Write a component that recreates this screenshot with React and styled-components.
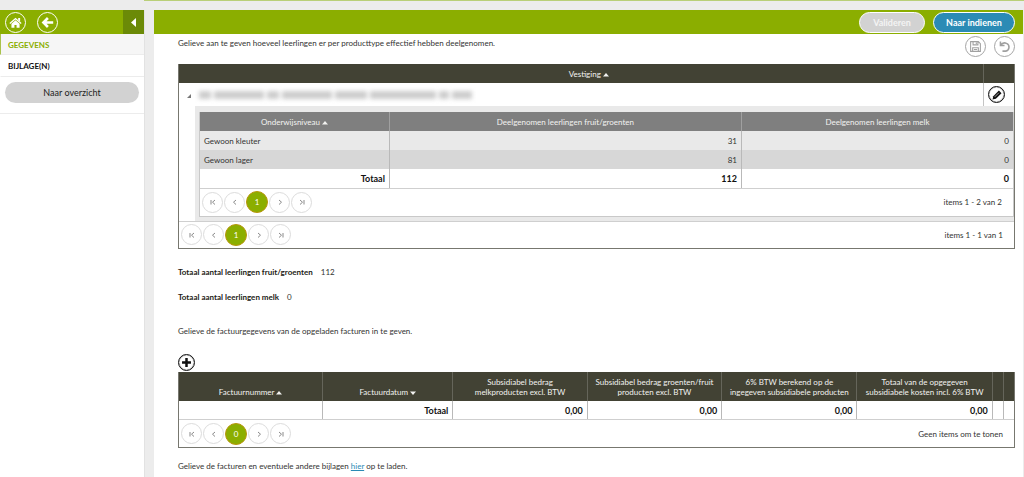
import React from 'react';
import styled, { createGlobalStyle } from 'styled-components';

const GlobalStyle = createGlobalStyle`
  * {
    box-sizing: border-box;
  }

  body {
    margin: 0;
    background: #ececec;
    color: #333332;
    font-family: Lato, 'Open Sans', sans-serif;
    font-size: 8px;
    line-height: 10px;
  }

  button {
    font-family: inherit;
    cursor: pointer;
  }

  p {
    margin: 0;
  }
`;

const TopStrip = styled.div`
  height: 10px;
  margin-left: 144px;
  border-top: 1px solid #b9cf78;
`;

const Page = styled.div`
  display: flex;
  gap: 9px;
  min-height: calc(100vh - 10px);
  padding-right: 1px;
`;

const Sidebar = styled.nav`
  flex: 0 0 145px;
  background: #fff;
  border-right: 1px solid #e2e2e2;
`;

const Bar = styled.div`
  display: flex;
  align-items: center;
  justify-content: ${props => (props.$end ? 'flex-end' : 'flex-start')};
  gap: ${props => (props.$end ? '8px' : '11px')};
  height: 24px;
  padding-left: 5px;
  padding-right: ${props => (props.$end ? '8px' : '0')};
  background: #8bae00;
`;

const RoundButton = styled.button`
  display: flex;
  align-items: center;
  justify-content: center;
  flex-shrink: 0;
  width: 21px;
  height: 21px;
  padding: 0;
  border: 1px solid #fff;
  border-radius: 50%;
  background: transparent;
  color: #fff;
`;

const CollapseButton = styled.button`
  display: flex;
  align-items: center;
  justify-content: center;
  width: 21px;
  height: 24px;
  margin-left: auto;
  padding: 0;
  border: 0;
  background: #6b8a07;
  color: #fff;
`;

const MenuLink = styled.a`
  display: block;
  height: ${props => (props.$active ? '21px' : '22px')};
  padding: 6px 7px;
  border-bottom: 1px solid #ececec;
  border-left: 1px solid ${props => (props.$active ? '#a9c24b' : '#fff')};
  background: ${props => (props.$active ? '#f6f6f6' : '#fff')};
  color: ${props => (props.$active ? '#8bae00' : '#111')};
  font-weight: 700;
  text-decoration: none;
`;

const SidebarActions = styled.div`
  padding: 5px 5px 10px;
  border-bottom: 1px solid #ececec;
`;

const OverviewButton = styled.button`
  width: 100%;
  height: 21px;
  border: 0;
  border-radius: 11px;
  background: #d2d2d2;
  color: #222;
  font-size: 9px;
`;

const PillButton = styled.button`
  width: ${props => (props.$primary ? '82px' : '66px')};
  height: 21px;
  padding: 0;
  border: 1px solid #fff;
  border-radius: 11px;
  background: ${props => (props.$primary ? '#2b8bb5' : '#d2d2d2')};
  color: ${props => (props.$primary ? '#fff' : '#f4f4f4')};
  font-size: 9px;
  font-weight: 700;
`;

const Main = styled.main`
  flex: 1;
  min-width: 0;
  background: #fff;
`;

const Content = styled.div`
  padding: 0 8px 6px 24px;
`;

const Intro = styled.div`
  display: flex;
  justify-content: space-between;
  height: 30px;
  padding-top: 2px;

  p {
    padding-top: 2px;
  }
`;

const Tools = styled.div`
  display: flex;
  gap: 8px;
`;

const ToolButton = styled(RoundButton)`
  border: 1px solid #a5a5a5;
  color: #a0a0a0;
`;

const EditButton = styled(RoundButton)`
  width: 17px;
  height: 17px;
  margin: 0 auto;
  border: 1px solid #111;
  box-shadow: inset 0 0 1px #111;
  color: #111;
`;

const Grid = styled.section`
  border: 1px solid ${props => (props.$nested ? '#c9c9c9' : '#77776f')};
  border-top: 0;
  background: #fff;
`;

const Table = styled.table`
  width: 100%;
  table-layout: fixed;
  border-collapse: collapse;
`;

const Th = styled.th`
  height: ${props => (props.$tall ? '29px' : '19px')};
  padding: ${props => (props.$tall ? '4px 2px' : '0 2px')};
  border-left: 1px solid ${props => (props.$nested ? '#a0a0a0' : '#65655a')};
  background: ${props => (props.$nested ? '#7f7f7f' : '#424234')};
  color: #f2f2f0;
  font-weight: 400;
  vertical-align: bottom;
  line-height: ${props => (props.$tall ? '10px' : '18px')};

  &:first-child,
  &.first {
    border-left: 0;
  }
`;

const Td = styled.td`
  height: 19px;
  padding: 0 4px;
  border-left: 1px solid #b9b9b9;
  background: ${props => props.$tone || '#fff'};
  text-align: ${props => (props.$left ? 'left' : 'right')};

  &:first-child {
    border-left: 0;
  }
`;

const TotalTd = styled(Td)`
  padding-top: 2px;
  border-bottom: 1px solid #cfcfcf;
  color: #111;
  font-size: 9px;
  font-weight: 700;
`;

const SiteTd = styled(Td)`
  height: 23px;
  padding: ${props => (props.$edit ? '0 4px 0 0' : '0 4px')};
  border-left: ${props => (props.$edit ? '1px solid #c4c4c4' : '0')};
`;

const DetailTd = styled.td`
  padding: 6px 0 4px 4px;
  background: #e9e9e9;
`;

const Redacted = styled.div`
  display: flex;
  gap: 3px;
  filter: blur(2px);

  i {
    height: 8px;
    background: #cdcdcd;
  }
`;

const Pager = styled.div`
  display: flex;
  align-items: center;
  gap: 1px;
  height: 27px;
  padding: 0 11px 0 2px;
  border-top: ${props => (props.$line ? '1px solid #cfcfcf' : '0')};
`;

const PageButton = styled.button`
  display: flex;
  align-items: center;
  justify-content: center;
  width: ${props => (props.$current ? '22px' : '21px')};
  height: ${props => (props.$current ? '22px' : '21px')};
  padding: 0;
  border: 1px solid ${props => (props.$current ? '#b8960c' : '#dcdcdc')};
  border-radius: 50%;
  background: ${props => (props.$current ? '#8bae00' : '#fff')};
  color: ${props => (props.$current ? '#fff' : '#8a8a8a')};
  font-size: 8px;
`;

const PagerInfo = styled.span`
  margin-left: auto;
`;

const Totals = styled.dl`
  display: flex;
  flex-direction: column;
  gap: 15px;
  margin: 0;
  padding: 18px 0 24px;

  div {
    display: flex;
    gap: 8px;
  }

  dt {
    color: #222214;
    font-weight: 700;
  }

  dd {
    margin: 0;
  }
`;

const AddButton = styled(EditButton)`
  margin: 18px 0 1px;
`;

const Closing = styled.p`
  padding-top: 13px;

  a {
    color: #2b8bb5;
  }
`;

const Svg = ({ size, children, ...rest }) => (
  <svg width={size} height={size} viewBox="0 0 16 16" fill="currentColor" aria-hidden="true" {...rest}>
    {children}
  </svg>
);

const HomeIcon = () => (
  <Svg size={13}>
    <path d="M8 2 15.500 8.600l-1 1.200L8 4.300 1.500 9.800l-1-1.200z" />
    <path d="M11.300 2.500h2.400v4.500l-2.400-2zM3 9.600 8 5.300l5 4.300V14.500H9.300v-3.500H6.700v3.500H3z" />
  </Svg>
);

const BackIcon = () => (
  <Svg size={13} fill="none" stroke="currentColor" strokeWidth="3.2">
    <path d="M8.500 2.500 3 8l5.500 5.500M3.500 8H15" />
  </Svg>
);

const SaveIcon = () => (
  <Svg size={13} fill="none" stroke="currentColor" strokeWidth="1.3">
    <path d="M2 2h9.500L14 4.500V14H2zM5 2v4h6V2M4.500 14V9.500h7V14M9 3v2M6 11.700h4" />
  </Svg>
);

const UndoIcon = () => (
  <Svg size={13} fill="none" stroke="currentColor" strokeWidth="1.9">
    <path d="M3 1.800v5h5M3.200 6.500C5 3.800 8 3 10.500 4.200a5 5 0 0 1-1 9.500H5.500" />
  </Svg>
);

const PencilIcon = () => (
  <Svg size={12}>
    <path d="M2 14l1-4.500L10.500 2 14 5.500 6.500 13z" />
    <path d="M5 10.500 10.500 5" stroke="#fff" strokeWidth="0.8" />
  </Svg>
);

const PlusIcon = () => (
  <Svg size={11}>
    <path d="M6.200 1.500h3.600v4.700h4.700v3.600H9.800v4.700H6.200V9.800H1.500V6.200h4.700z" />
  </Svg>
);

const CaretLeft = () => (
  <svg width="5" height="9" viewBox="0 0 5 9" fill="currentColor" aria-hidden="true">
    <path d="M5 0v9L0 4.500z" />
  </svg>
);

const SortIcon = ({ down }) => (
  <svg width="6" height="4" viewBox="0 0 6 4" fill="currentColor" aria-hidden="true">
    <path d={down ? 'M0 .5h6L3 4z' : 'M0 3.500h6L3 0z'} />
  </svg>
);

const pagerPaths = {
  first: 'M2 2v4.500M6 2 3.500 4.200 6 6.500',
  prev: 'M5 2 2.500 4.200 5 6.500',
  next: 'M3 2l2.500 2.200L3 6.500',
  last: 'M2 2l2.500 2.200L2 6.500M6 2v4.500',
};

const PagerIcon = ({ name }) => (
  <svg width="8" height="8" viewBox="0 0 8 8" fill="none" stroke="currentColor" aria-hidden="true">
    <path d={pagerPaths[name]} />
  </svg>
);

const PagerBar = ({ page, info, line }) => (
  <Pager $line={line}>
    <PageButton aria-label="Eerste pagina"><PagerIcon name="first" /></PageButton>
    <PageButton aria-label="Vorige pagina"><PagerIcon name="prev" /></PageButton>
    <PageButton $current>{page}</PageButton>
    <PageButton aria-label="Volgende pagina"><PagerIcon name="next" /></PageButton>
    <PageButton aria-label="Laatste pagina"><PagerIcon name="last" /></PageButton>
    <PagerInfo>{info}</PagerInfo>
  </Pager>
);

const levels = [
  { name: 'Gewoon kleuter', fruit: 31, milk: 0, tone: '#e9e9e9' },
  { name: 'Gewoon lager', fruit: 81, milk: 0, tone: '#d7d7d7' },
];

const redactedWidths = [12, 50, 12, 50, 32, 66, 10, 20];

const LevelGrid = () => (
  <Grid $nested>
    <Table>
      <colgroup>
        <col style={{ width: '23.3%' }} />
        <col style={{ width: '43.3%' }} />
        <col />
      </colgroup>
      <thead>
        <tr>
          <Th $nested>Onderwijsniveau <SortIcon /></Th>
          <Th $nested>Deelgenomen leerlingen fruit/groenten</Th>
          <Th $nested>Deelgenomen leerlingen melk</Th>
        </tr>
      </thead>
      <tbody>
        {levels.map(level => (
          <tr key={level.name}>
            <Td $left $tone={level.tone}>{level.name}</Td>
            <Td $tone={level.tone}>{level.fruit}</Td>
            <Td $tone={level.tone}>{level.milk}</Td>
          </tr>
        ))}
      </tbody>
      <tfoot>
        <tr>
          <TotalTd>Totaal</TotalTd>
          <TotalTd>112</TotalTd>
          <TotalTd>0</TotalTd>
        </tr>
      </tfoot>
    </Table>
    <PagerBar page="1" info="items 1 - 2 van 2" />
  </Grid>
);

const SiteGrid = () => (
  <Grid>
    <Table>
      <colgroup>
        <col style={{ width: 16 }} />
        <col />
        <col style={{ width: 31 }} />
      </colgroup>
      <thead>
        <tr>
          <Th />
          <Th className="first">Vestiging <SortIcon /></Th>
          <Th />
        </tr>
      </thead>
      <tbody>
        <tr>
          <SiteTd>
            <svg width="4" height="4" viewBox="0 0 4 4" fill="#777" aria-hidden="true">
              <path d="M4 0v4H0z" />
            </svg>
          </SiteTd>
          <SiteTd>
            <Redacted>
              {redactedWidths.map((width, index) => (
                <i key={index} style={{ width }} />
              ))}
            </Redacted>
          </SiteTd>
          <SiteTd $edit>
            <EditButton aria-label="Bewerken"><PencilIcon /></EditButton>
          </SiteTd>
        </tr>
        <tr>
          <td />
          <DetailTd colSpan={2}>
            <LevelGrid />
          </DetailTd>
        </tr>
      </tbody>
    </Table>
    <PagerBar line page="1" info="items 1 - 1 van 1" />
  </Grid>
);

const InvoiceGrid = () => (
  <Grid>
    <Table>
      <colgroup>
        <col style={{ width: '17.2%' }} />
        <col style={{ width: '15.6%' }} />
        <col style={{ width: '16.1%' }} />
        <col style={{ width: '16.1%' }} />
        <col style={{ width: '16.2%' }} />
        <col style={{ width: '16.2%' }} />
        <col />
        <col />
      </colgroup>
      <thead>
        <tr>
          <Th $tall>Factuurnummer <SortIcon /></Th>
          <Th $tall>Factuurdatum <SortIcon down /></Th>
          <Th $tall>Subsidiabel bedrag<br />melkproducten excl. BTW</Th>
          <Th $tall>Subsidiabel bedrag groenten/fruit<br />producten excl. BTW</Th>
          <Th $tall>6% BTW berekend op de<br />ingegeven subsidiabele producten</Th>
          <Th $tall>Totaal van de opgegeven<br />subsidiabele kosten incl. 6% BTW</Th>
          <Th $tall />
          <Th $tall />
        </tr>
      </thead>
      <tfoot>
        <tr>
          <TotalTd />
          <TotalTd>Totaal</TotalTd>
          <TotalTd>0,00</TotalTd>
          <TotalTd>0,00</TotalTd>
          <TotalTd>0,00</TotalTd>
          <TotalTd>0,00</TotalTd>
          <TotalTd />
          <TotalTd />
        </tr>
      </tfoot>
    </Table>
    <PagerBar page="0" info="Geen items om te tonen" />
  </Grid>
);

const App = () => (
  <>
    <GlobalStyle />
    <TopStrip />
    <Page>
      <Sidebar>
        <Bar>
          <RoundButton aria-label="Home"><HomeIcon /></RoundButton>
          <RoundButton aria-label="Terug"><BackIcon /></RoundButton>
          <CollapseButton aria-label="Menu inklappen"><CaretLeft /></CollapseButton>
        </Bar>
        <MenuLink href="#gegevens" $active>GEGEVENS</MenuLink>
        <MenuLink href="#bijlagen">BIJLAGE(N)</MenuLink>
        <SidebarActions>
          <OverviewButton>Naar overzicht</OverviewButton>
        </SidebarActions>
      </Sidebar>
      <Main>
        <Bar $end>
          <PillButton>Valideren</PillButton>
          <PillButton $primary>Naar indienen</PillButton>
        </Bar>
        <Content>
          <Intro>
            <p>Gelieve aan te geven hoeveel leerlingen er per producttype effectief hebben deelgenomen.</p>
            <Tools>
              <ToolButton aria-label="Opslaan"><SaveIcon /></ToolButton>
              <ToolButton aria-label="Ongedaan maken"><UndoIcon /></ToolButton>
            </Tools>
          </Intro>
          <SiteGrid />
          <Totals>
            <div>
              <dt>Totaal aantal leerlingen fruit/groenten</dt>
              <dd>112</dd>
            </div>
            <div>
              <dt>Totaal aantal leerlingen melk</dt>
              <dd>0</dd>
            </div>
          </Totals>
          <p>Gelieve de factuurgegevens van de opgeladen facturen in te geven.</p>
          <AddButton aria-label="Factuur toevoegen"><PlusIcon /></AddButton>
          <InvoiceGrid />
          <Closing>
            Gelieve de facturen en eventuele andere bijlagen <a href="#bijlagen">hier</a> op te laden.
          </Closing>
        </Content>
      </Main>
    </Page>
  </>
);

export default App;
